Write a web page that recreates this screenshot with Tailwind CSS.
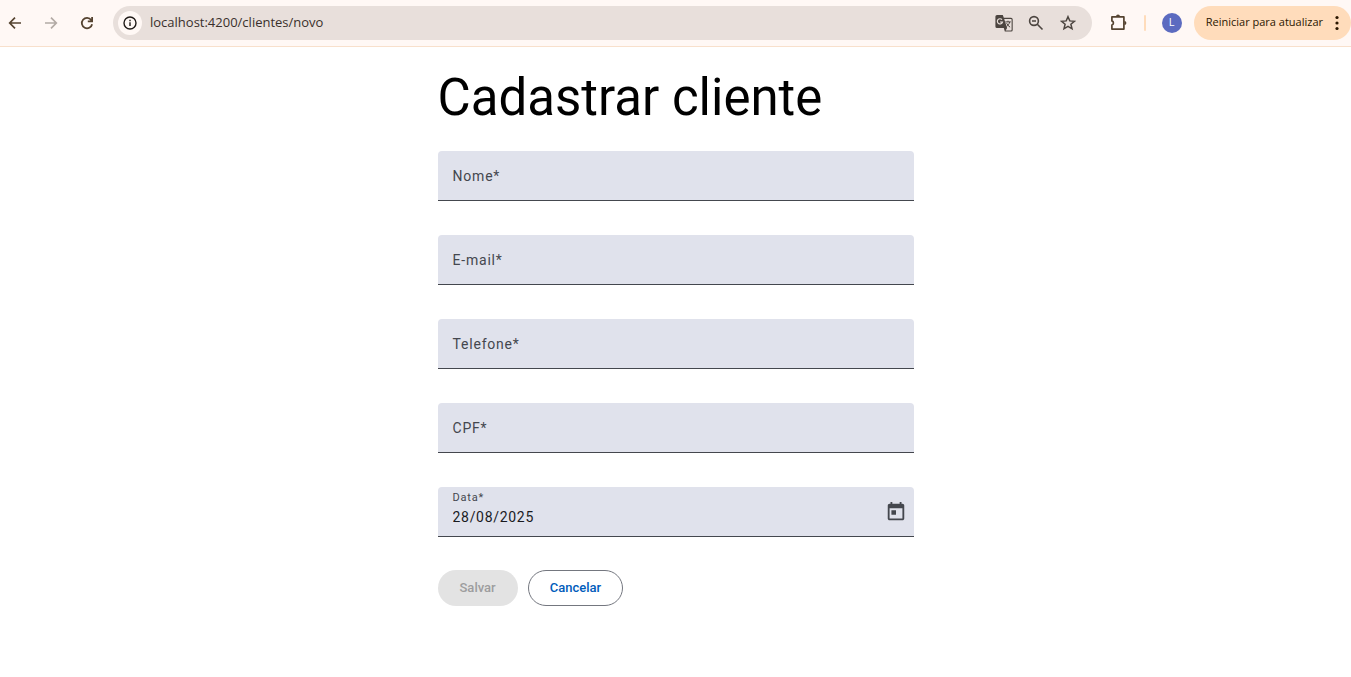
<!DOCTYPE html>
<html lang="pt-BR">
<head>
<meta charset="utf-8">
<meta name="viewport" content="width=device-width, initial-scale=1">
<title>Cadastrar cliente</title>
<script src="https://cdn.jsdelivr.net/npm/@tailwindcss/browser@4"></script>
</head>
<body class="min-h-screen bg-white font-['Roboto',sans-serif] text-black">
<header class="flex h-[47px] items-center border-b border-[#f8e0cc] bg-[#fff8f5] pb-px pl-[3px] font-['Open_Sans',sans-serif] text-[#554330]">
  <nav class="flex items-center gap-3" aria-label="Navegação">
    <button type="button" aria-label="Voltar" class="flex size-6 items-center justify-center">
      <svg class="size-4" viewBox="0 0 16 16" fill="none" stroke="currentColor" stroke-width="1.7"><path d="M14 8H3M8 2.700 2.700 8 8 13.300"/></svg>
    </button>
    <button type="button" aria-label="Avançar" class="flex size-6 items-center justify-center text-[#b3aaa5]">
      <svg class="size-4" viewBox="0 0 16 16" fill="none" stroke="currentColor" stroke-width="1.7"><path d="M2 8h11M8 2.700 13.300 8 8 13.300"/></svg>
    </button>
    <button type="button" aria-label="Recarregar" class="flex size-6 items-center justify-center">
      <svg class="size-4" viewBox="0 0 16 16" fill="none" stroke="currentColor" stroke-width="1.8"><path d="M12.200 5A5.200 5.200 0 1 0 13.100 9.200"/><path d="M13.100 2v4.300H8.800"/><path fill="currentColor" stroke="none" d="m10.500 6.300 3-3v3Z"/></svg>
    </button>
  </nav>
  <div class="ml-[14px] flex h-[34px] min-w-0 flex-1 items-center rounded-full bg-[#e8dfdb] pl-[5px] pr-4 text-[#4c4540]">
    <button type="button" aria-label="Informações do site" class="flex size-6 items-center justify-center rounded-full bg-[#fff8f5] text-[#1f1a17]">
      <svg class="size-4" viewBox="0 0 16 16" fill="none" stroke="currentColor" stroke-width="1.4"><circle cx="8" cy="8" r="6"/><path d="M8 7.200v3.900M8 4.700v1.500"/></svg>
    </button>
    <input type="text" aria-label="Endereço" value="localhost:4200/clientes/novo" class="ml-2 min-w-0 flex-1 bg-transparent text-[13px] text-[#3a302b] outline-none">
    <div class="flex items-center gap-4">
      <button type="button" aria-label="Traduzir" class="flex size-4">
        <svg class="size-4 overflow-visible" viewBox="0 0 16 16"><path fill="currentColor" d="M1 0h5.8l1 2.700H15A1.700 1.700 0 0 1 16.700 4.400V15A1.600 1.600 0 0 1 15 16.600H8.800L7.800 13H1A1.600 1.600 0 0 1-.6 11.400V1.600A1.600 1.600 0 0 1 1 0Z"/><path fill="#e8dfdb" d="M8.200 3.900H15c.4 0 .6.200.6.600V14.800c0 .4-.2.700-.6.700H9.700l1.400-2.600Z"/><path fill="none" stroke="#e8dfdb" stroke-width="1.200" d="M6 4.700A2.600 2.600 0 1 0 6.500 7H4"/><path fill="none" stroke="currentColor" stroke-width="1" d="M9.300 6.900h5.500M12 5.700v1.200M13.700 7c-.5 2-1.700 3.500-3.200 4.500M10.600 8.200c.8 1.700 2 3 3.500 4"/></svg>
      </button>
      <button type="button" aria-label="Zoom" class="flex size-4">
        <svg class="size-4" viewBox="0 0 16 16" fill="none" stroke="currentColor" stroke-width="1.600"><circle cx="6" cy="6" r="4.400"/><path d="m9.300 9.300 5.200 5.200M4 6h4"/></svg>
      </button>
      <button type="button" aria-label="Favoritar" class="flex size-4">
        <svg class="size-4" viewBox="0 0 16 16" fill="none" stroke="currentColor" stroke-width="1.500"><path d="m8 1.700 1.800 4.200 4.600.4-3.500 3 1.100 4.500L8 11.400l-4 2.400 1.100-4.500-3.500-3 4.600-.4Z"/></svg>
      </button>
    </div>
  </div>
  <button type="button" aria-label="Extensões" class="ml-[17px] flex size-5 items-center justify-center">
    <svg class="size-5" viewBox="0 0 20 20" fill="none" stroke="currentColor" stroke-width="1.700" stroke-linejoin="round"><path d="M2.900 3.900h12v12.200h-12v-4a2.200 2.200 0 0 0 0-4.200Z"/><path fill="currentColor" stroke="none" d="M7 3.600a2 2 0 0 1 4 0ZM15.400 8a2 2 0 0 1 0 4Z"/></svg>
  </button>
  <span class="ml-[15px] h-4 w-0.5 rounded-full bg-[#ffdcbb]"></span>
  <button type="button" aria-label="Perfil" class="ml-4 flex size-5 items-center justify-center rounded-full bg-[#5c6bc0] text-[11px] text-white">L</button>
  <button type="button" class="ml-3 flex h-[34px] items-center gap-2 whitespace-nowrap rounded-full bg-[#ffdcbb] pl-3 pr-2 text-[11px] text-[#2b1700]">
    Reiniciar para atualizar
    <svg class="h-4 w-3" viewBox="0 0 12 16" fill="currentColor"><circle cx="6" cy="2.500" r="1.600"/><circle cx="6" cy="8" r="1.600"/><circle cx="6" cy="13.500" r="1.600"/></svg>
  </button>
</header>

<main class="mx-auto w-full max-w-[476px] pt-[21px]">
  <h1 class="text-[51px] leading-[60px]">Cadastrar cliente</h1>
  <form class="mt-[23px] tracking-wider">
    <div class="flex flex-col gap-[34px]">
      <div class="relative h-[50px] rounded-t border-b border-[#44474e] bg-[#e0e2ec]">
        <input id="nome" type="text" required class="size-full bg-transparent px-[15px] text-sm text-[#1a1b1f] outline-none">
        <label for="nome" class="pointer-events-none absolute inset-0 flex items-center px-[15px] pt-px text-sm text-[#44474e]">Nome*</label>
      </div>
      <div class="relative h-[50px] rounded-t border-b border-[#44474e] bg-[#e0e2ec]">
        <input id="email" type="email" required class="size-full bg-transparent px-[15px] text-sm text-[#1a1b1f] outline-none">
        <label for="email" class="pointer-events-none absolute inset-0 flex items-center px-[15px] pt-px text-sm text-[#44474e]">E-mail*</label>
      </div>
      <div class="relative h-[50px] rounded-t border-b border-[#44474e] bg-[#e0e2ec]">
        <input id="telefone" type="tel" required class="size-full bg-transparent px-[15px] text-sm text-[#1a1b1f] outline-none">
        <label for="telefone" class="pointer-events-none absolute inset-0 flex items-center px-[15px] pt-px text-sm text-[#44474e]">Telefone*</label>
      </div>
      <div class="relative h-[50px] rounded-t border-b border-[#44474e] bg-[#e0e2ec]">
        <input id="cpf" type="text" required class="size-full bg-transparent px-[15px] text-sm text-[#1a1b1f] outline-none">
        <label for="cpf" class="pointer-events-none absolute inset-0 flex items-center px-[15px] pt-px text-sm text-[#44474e]">CPF*</label>
      </div>
      <div class="flex h-[50px] items-center rounded-t border-b border-[#44474e] bg-[#e0e2ec] pl-[15px] pr-2">
        <div class="flex min-w-0 flex-1 flex-col self-start pt-[3px]">
          <label for="data" class="text-[11px] leading-4 text-[#44474e]">Data*</label>
          <input id="data" type="text" required value="28/08/2025" class="h-[22px] w-full bg-transparent text-sm tracking-wider text-[#1a1b1f] outline-none">
        </div>
        <button type="button" aria-label="Abrir calendário" class="flex size-5 items-center justify-center text-[#44474e]">
          <svg class="size-[22px] shrink-0" viewBox="0 0 24 24" fill="currentColor"><path d="M19 3h-1V1h-2v2H8V1H6v2H5c-1.110 0-1.990.9-1.990 2L3 19c0 1.100.89 2 2 2h14c1.100 0 2-.9 2-2V5c0-1.100-.9-2-2-2zm0 16H5V8h14v11zM7 10h5v5H7z"/></svg>
        </button>
      </div>
    </div>
    <div class="mt-[33px] flex gap-[10px] text-[13px] font-medium tracking-normal">
      <button type="submit" disabled class="h-9 rounded-full bg-[#e3e3e3] px-[22px] text-[#9d9d9e]">Salvar</button>
      <button type="button" class="h-9 rounded-full border border-[#74777f] px-[21px] text-[#005cbb]">Cancelar</button>
    </div>
  </form>
</main>
</body>
</html>
